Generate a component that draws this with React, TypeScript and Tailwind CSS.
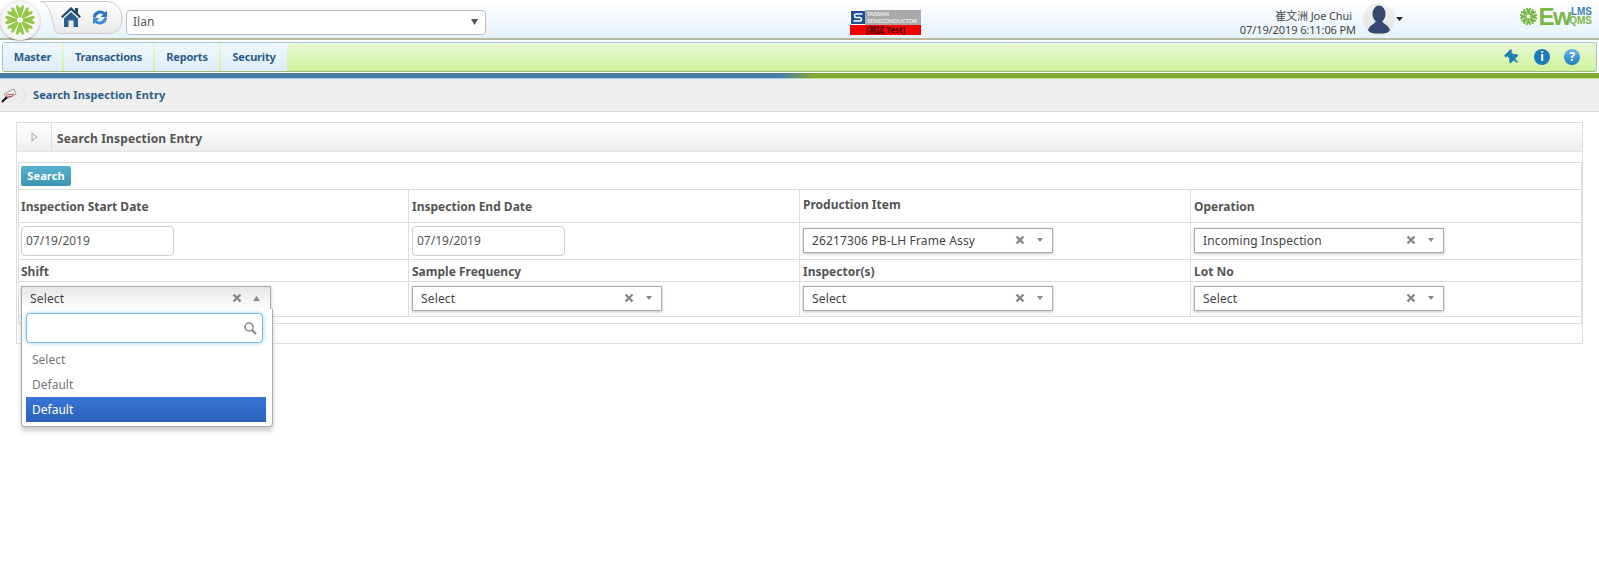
import React from 'react';
import { FaThumbtack } from 'react-icons/fa';

const tabs = [
  { label: 'Master', w: 'w-[59px]' },
  { label: 'Transactions', w: 'w-[89px]' },
  { label: 'Reports', w: 'w-[64px]' },
  { label: 'Security', w: 'w-[66px]' },
];

function Snowflake({ size, color }: { size: number; color: string }) {
  const angles = [0, 45, 90, 135, 180, 225, 270, 315];
  return (
    <svg width={size} height={size} viewBox="-17 -17 34 34">
      {angles.map(a => (
        <path
          key={a}
          transform={`rotate(${a})`}
          d="M-1.200 -3L-4.800 -14.500L-2.500 -16L0 -12.500L2.500 -16L4.800 -14.500L1.200 -3Z"
          fill={color}
        />
      ))}
    </svg>
  );
}

function SelectBox({ value, open }: { value: string; open?: boolean }) {
  return (
    <div
      className={`w-[250px] h-[25px] flex items-center border border-[#aaa] pl-[8px] text-[12px] tracking-[0.15px] text-[#444] shadow-[0_1px_3px_rgba(0,0,0,0.25)] ${
        open ? 'pr-[10px] bg-gradient-to-b from-[#e6e6e6] to-white' : 'pr-[9px] bg-white'
      }`}
    >
      <span className="flex-1 pt-px">{value}</span>
      <svg width="10" height="10" viewBox="0 0 10 10" className={open ? 'mr-[11px]' : 'mr-[12px]'}>
        <path d="M1.500 1.500L8.500 8.500M8.500 1.500L1.500 8.500" stroke="#888" strokeWidth="2.400" />
      </svg>
      {open ? (
        <svg width="7" height="5" viewBox="0 0 7 5">
          <path d="M0 5L3.500 0L7 5Z" fill="#888" />
        </svg>
      ) : (
        <svg width="6" height="4" viewBox="0 0 6 4">
          <path d="M0 0L3 4L6 0Z" fill="#888" />
        </svg>
      )}
    </div>
  );
}

function DateBox() {
  return (
    <div className="w-[153px] h-[30px] flex items-center border border-[#ccc] rounded-[4px] bg-white pl-[4px] text-[12px] text-[#555]">
      07/19/2019
    </div>
  );
}

export default function App() {
  return (
    <div className="min-h-[566px] bg-white font-['Noto_Sans','Noto_Sans_CJK_TC',sans-serif] text-[#444]">
      {/* Header */}
      <div className="relative h-[38px] flex items-center bg-gradient-to-b from-white to-[#e6f1fb]">
        <div className="absolute left-0 top-0 z-10 w-[40px] h-[40px] rounded-full flex items-center justify-center bg-[radial-gradient(circle,#ffffff_50%,#cfd3cf_100%)] shadow-[0_1px_2px_rgba(0,0,0,0.3)]">
          <Snowflake size={32} color="#96c94b" />
        </div>
        <div className="relative ml-[40px] h-[33px] w-[83px] mb-[4px] flex items-center gap-[11px] pl-[21px]">
          <svg width="83" height="33" viewBox="0 0 83 33" className="absolute left-0 top-0">
            <defs>
              <linearGradient id="tabFill" x1="0" y1="0" x2="0" y2="1">
                <stop offset="0" stopColor="#ffffff" />
                <stop offset="1" stopColor="#e8e8e8" />
              </linearGradient>
            </defs>
            <path
              d="M0 0.500C8 1 11 12 14 26C15 31 17 32.500 20 32.500H68C76 32.500 82 28 82 17C82 8 76 0.500 66 0.500Z"
              fill="url(#tabFill)"
              stroke="#ccc"
            />
          </svg>
          <svg width="20" height="20" viewBox="0 0 20 20" className="relative">
            <path d="M10 0L14 3.500V1H17V6.500L20 9.500L18.500 11L10 3.200L1.500 11L0 9.500Z" fill="#22496c" />
            <path d="M3 11.500L10 5L17 11.500V20H12.500V13.500H7.500V20H3Z" fill="#2b5f90" />
          </svg>
          <svg width="16" height="17" viewBox="0 0 16 16" className="relative">
            <path d="M1 8C1 3 5 1 8 1C10.500 1 12 2 13 3L15 1V7.500H8.500L11 5C9.500 3.500 5 3.500 4 8Z" fill="#2a74c4" />
            <path d="M15 8C15 13 11 15 8 15C5.500 15 4 14 3 13L1 15V8.500H7.500L5 11C6.500 12.500 11 12.500 12 8Z" fill="#3f8bd6" />
          </svg>
        </div>
        <div className="ml-[3px] w-[360px] h-[25px] mt-[6px] flex items-center justify-between pl-[6px] pr-[7px] bg-white border border-[#bbb] rounded-[4px] text-[12px] text-[#555]">
          <span>Ilan</span>
          <svg width="7" height="6" viewBox="0 0 7 6">
            <path d="M0 0H7L3.500 6Z" fill="#555" />
          </svg>
        </div>
        <div className="ml-[364px] w-[71px] mt-[7px] flex flex-col">
          <div className="h-[15px] flex bg-[#a9a9a9]">
            <div className="w-[15px] bg-white flex items-center justify-center">
              <svg width="14" height="13" viewBox="0 0 14 13">
                <path d="M0 0H14V13H0Z" fill="#1c4f94" />
                <path d="M11.500 3H5C3 3 3 6.500 5 6.500H9C11 6.500 11 10 9 10H2.500" fill="none" stroke="#fff" strokeWidth="1.600" />
              </svg>
            </div>
            <div className="pl-[2px] pt-[1px] text-[6px] leading-[6.500px] text-white whitespace-nowrap tracking-[-0.1px]">
              TAIWAN
              <br />
              SEMICONDUCTOR
            </div>
          </div>
          <div className="h-[10px] bg-[#f40000] text-center text-[8px] leading-[10px] font-bold text-[#400]">[測試 Test]</div>
        </div>
        <div className="ml-auto mt-[8px] mr-[7px] flex flex-col items-end text-[11px] tracking-[-0.1px] leading-[14px] text-[#444]">
          <span className="mr-[4px]">崔文洲 Joe Chui</span>
          <span>07/19/2019 6:11:06 PM</span>
        </div>
        <div className="w-[32px] h-[32px] rounded-full bg-gradient-to-b from-[#f2f2f2] to-[#e2e2e2] overflow-hidden">
          <svg width="32" height="32" viewBox="0 0 32 32">
            <ellipse cx="16" cy="11" rx="6.500" ry="8.500" fill="#35486f" />
            <path d="M5 29C5 22 11 22 13 18H19C21 22 27 22 27 29C27 31 5 31 5 29Z" fill="#35486f" />
          </svg>
        </div>
        <svg width="7" height="4" viewBox="0 0 7 4" className="ml-[1px] mr-[196px]">
          <path d="M0 0H7L3.500 4Z" fill="#222" />
        </svg>
        <div className="absolute right-[7px] top-[6px] flex items-start text-[#7ab648] font-['Liberation_Sans',sans-serif] font-bold">
          <div className="mt-px mr-[1px]">
            <Snowflake size={19} color="#7ab648" />
          </div>
          <span className="text-[24px] leading-[22px] tracking-[-1.500px]">Ew</span>
          <span className="flex flex-col items-end text-[10px] leading-[9px] ml-[-1px] mt-[1px]">
            <span className="text-[#3a7fb8]">LMS</span>
            <span>QMS</span>
          </span>
        </div>
      </div>
      <div className="h-[2px] bg-[#b4b99c]" />

      {/* Nav */}
      <div className="pt-[2px] px-[2px] pb-px">
        <div className="h-[30px] flex items-stretch gap-[2px] rounded-[3px] border border-[#a3c4dc] border-b-[#9dbb7c] bg-gradient-to-b from-[#eaf8d6] to-[#cdf299]">
          {tabs.map(t => (
            <div
              key={t.label}
              className={`${t.w} flex items-center justify-center bg-gradient-to-b from-[#f0f7fc] to-[#ddecf8] text-[11px] tracking-[-0.2px] font-bold text-[#2d5c86]`}
            >
              {t.label}
            </div>
          ))}
          <div className="ml-auto flex items-center gap-[14px] pr-[16px]">
            <FaThumbtack className="w-[15px] h-[15px] text-[#1f7fb0] -rotate-45" />
            <div className="w-[16px] h-[16px] rounded-full bg-[#1b7ab8] text-white text-[12px] font-bold leading-[16px] text-center">i</div>
            <div className="w-[16px] h-[16px] rounded-full bg-gradient-to-b from-[#6ab6e6] to-[#1d7cbc] text-white text-[12px] font-bold leading-[16px] text-center">?</div>
          </div>
        </div>
      </div>
      <div className="h-[5px] bg-[linear-gradient(to_right,#4a7ca8_0,#4a7ca8_780px,#82a82d_815px,#82a82d_100%)]" />
      <div className="h-px bg-[linear-gradient(to_right,#a9cfee_0,#a9cfee_780px,#c5dc8a_815px,#c5dc8a_100%)]" />

      {/* Breadcrumb */}
      <div className="h-[33px] flex items-center bg-[#eeeeee] border-b border-[#d5d5d5]">
        <svg width="16" height="18" viewBox="0 0 16 18" className="ml-px">
          <path d="M3 8L13 3L15 8L6 13Z" fill="#f4f4f4" stroke="#999" />
          <path d="M5 9L13 8M6 11L12 10" stroke="#c44" />
          <path d="M1 16L6 11" stroke="#111" strokeWidth="2" />
        </svg>
        <svg width="7" height="20" viewBox="0 0 7 20" className="ml-[3px]">
          <path d="M1 1L6 10L1 19" fill="none" stroke="#ddd" />
        </svg>
        <span className="ml-[6px] pt-px text-[11px] tracking-[0.1px] font-bold text-[#2d5c86]">Search Inspection Entry</span>
      </div>

      {/* Panel */}
      <div className="relative mx-[16px] mt-[10px] h-[222px] border border-[#ddd]">
        <div className="h-[29px] flex items-stretch bg-gradient-to-b from-white to-[#eeeeee] border-b border-[#e5e5e5]">
          <div className="w-[35px] flex items-center justify-center border-r border-[#ddd]">
            <svg width="7" height="10" viewBox="0 0 7 10">
              <path d="M1 0.500V9.500M1 1.500L6 5L1 8.500" fill="none" stroke="#aaa" />
            </svg>
          </div>
          <div className="pl-[5px] pt-[3px] flex items-center text-[12px] tracking-[0.15px] font-bold text-[#555]">Search Inspection Entry</div>
        </div>
        <div className="mt-[10px] ml-px border border-b-0 border-[#ddd]">
          <div className="h-[27px] flex items-center pl-[2px] border-b border-[#ddd]">
            <div className="w-[50px] h-[20px] rounded-[2px] bg-gradient-to-b from-[#58b3cf] to-[#3d93b3] text-center text-[11px] tracking-[0.1px] leading-[20px] font-bold text-white">
              Search
            </div>
          </div>
          <div className="grid grid-cols-[389px_391px_391px_1fr] grid-rows-[33px_37px_22px_35px] text-[12px]">
            <div className="flex items-center pl-[2px] pt-[2px] border-b border-[#ddd] font-bold text-[#555]">Inspection Start Date</div>
            <div className="flex items-center pl-[3px] pt-[2px] border-l border-b border-[#ddd] font-bold text-[#555]">Inspection End Date</div>
            <div className="flex items-center pb-[2px] pl-[3px] border-l border-b border-[#ddd] font-bold text-[#555]">Production Item</div>
            <div className="flex items-center pl-[3px] pt-[2px] border-l border-b border-[#ddd] font-bold text-[#555]">Operation</div>

            <div className="flex items-center pl-[2px] border-b border-[#ddd]"><DateBox /></div>
            <div className="flex items-center pl-[3px] border-l border-b border-[#ddd]"><DateBox /></div>
            <div className="flex items-center pb-[2px] pl-[3px] border-l border-b border-[#ddd]"><SelectBox value="26217306 PB-LH Frame Assy" /></div>
            <div className="flex items-center pb-[2px] pl-[3px] border-l border-b border-[#ddd]"><SelectBox value="Incoming Inspection" /></div>

            <div className="flex items-center pl-[2px] pt-[2px] border-b border-[#ddd] font-bold text-[#555]">Shift</div>
            <div className="flex items-center pl-[3px] pt-[2px] border-l border-b border-[#ddd] font-bold text-[#555]">Sample Frequency</div>
            <div className="flex items-center pl-[3px] pt-[2px] border-l border-b border-[#ddd] font-bold text-[#555]">Inspector(s)</div>
            <div className="flex items-center pl-[3px] pt-[2px] border-l border-b border-[#ddd] font-bold text-[#555]">Lot No</div>

            <div className="flex items-center pb-[2px] pl-[2px] border-b border-[#ddd]"><SelectBox value="Select" open /></div>
            <div className="flex items-center pb-[2px] pl-[3px] border-l border-b border-[#ddd]"><SelectBox value="Select" /></div>
            <div className="flex items-center pb-[2px] pl-[3px] border-l border-b border-[#ddd]"><SelectBox value="Select" /></div>
            <div className="flex items-center pb-[2px] pl-[3px] border-l border-b border-[#ddd]"><SelectBox value="Select" /></div>
          </div>
          <div className="h-[7px] border-b border-[#ddd]" />
        </div>

        {/* Open dropdown */}
        <div className="absolute left-[4px] top-[186px] w-[252px] h-[118px] z-10 bg-white border border-[#aaa] border-t-0 rounded-b-[4px] shadow-[0_4px_5px_rgba(0,0,0,0.2)] pt-[4px] px-[4px]">
          <div className="h-[30px] w-[237px] flex items-center justify-end pr-[5px] bg-white border border-[#7cbbe8] rounded-[4px] shadow-[0_0_4px_rgba(82,168,236,0.6)]">
            <svg width="13" height="13" viewBox="0 0 13 13">
              <circle cx="5" cy="5" r="4" fill="none" stroke="#888" strokeWidth="1.500" />
              <path d="M8 8L12 12" stroke="#888" strokeWidth="2.200" />
            </svg>
          </div>
          <div className="mt-[4px] flex flex-col text-[12px] text-[#777]">
            <div className="h-[25px] flex items-center pl-[6px] w-[240px]">Select</div>
            <div className="h-[25px] flex items-center pl-[6px] w-[240px]">Default</div>
            <div className="h-[25px] flex items-center pl-[6px] w-[240px] text-white bg-gradient-to-b from-[#3875d7] to-[#2a62bc]">Default</div>
          </div>
        </div>
      </div>
    </div>
  );
}
